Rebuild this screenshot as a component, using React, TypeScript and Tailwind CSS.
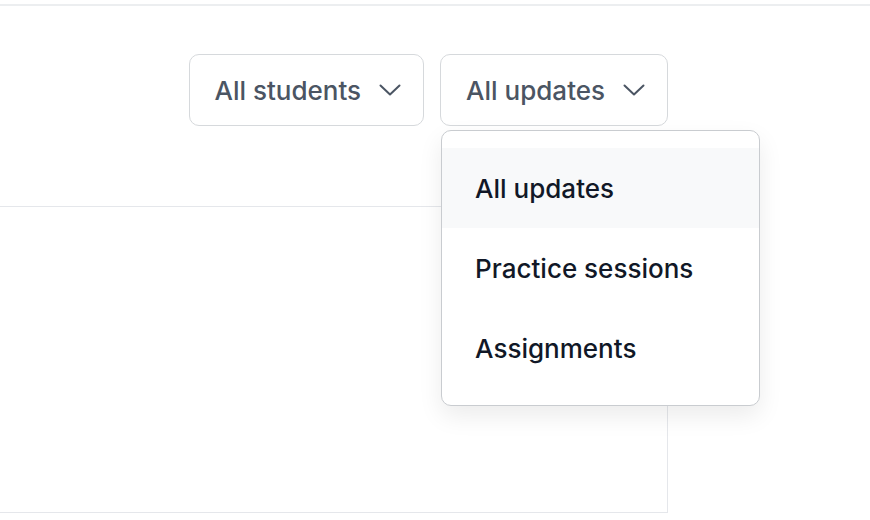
import React from "react";

const options = ["All updates", "Practice sessions", "Assignments"];

function Chevron() {
  return (
    <svg width="22" height="12" viewBox="0 0 22 12" fill="none" className="shrink-0">
      <polyline
        points="1.5,1.5 11,10.5 20.5,1.5"
        stroke="#4b5563"
        strokeWidth="2"
        strokeLinecap="round"
        strokeLinejoin="round"
      />
    </svg>
  );
}

function FilterButton({ label }: { label: string }) {
  return (
    <button className="h-[72px] flex items-center gap-[18px] pl-[25px] pr-[22px] rounded-[10px] border-[1.5px] border-[#d6d9dc] bg-white text-[26px] font-medium text-[#4b5563]">
      <span>{label}</span>
      <Chevron />
    </button>
  );
}

export default function App() {
  return (
    <div className="relative h-[520px] w-full overflow-hidden bg-white font-['Inter',sans-serif]">
      <div className="pt-[4px]">
        <div className="border-t-2 border-[#eceef0]" />
      </div>

      {/* Toolbar with filters */}
      <div className="w-[668px] flex justify-end gap-4 pt-[48px]">
        <FilterButton label="All students" />
        <div className="relative">
          <FilterButton label="All updates" />

          {/* Open dropdown */}
          <div className="absolute z-10 top-full left-[1px] mt-[4px] w-[319px] py-[17px] rounded-[10px] border-[1.5px] border-[#c9ccd0] bg-white shadow-[0_10px_24px_rgba(0,0,0,0.08)]">
            {options.map((opt, i) => (
              <div
                key={opt}
                className={`h-[80px] flex items-center px-[33px] text-[26px] font-medium text-[#111827] ${
                  i === 0 ? "bg-[#f8f9fa]" : ""
                }`}
              >
                {opt}
              </div>
            ))}
          </div>
        </div>
      </div>

      {/* Content panel */}
      <div className="mt-[80px] w-[668px] h-[307px] border-t border-r border-b border-[#e5e7eb]" />
    </div>
  );
}
